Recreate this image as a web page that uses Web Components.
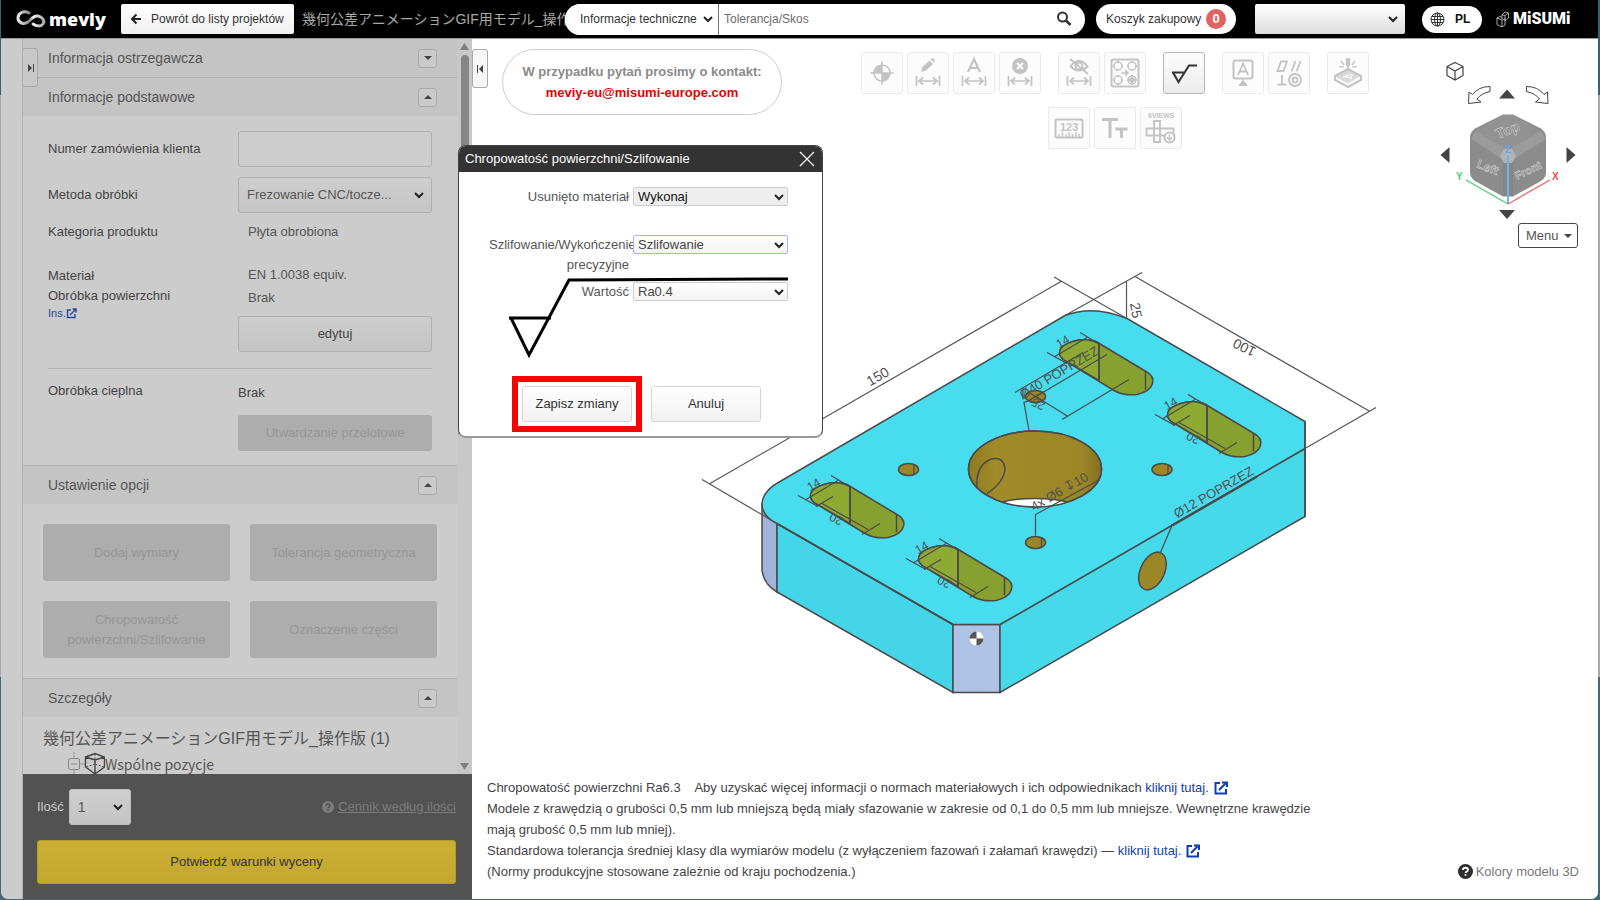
<!DOCTYPE html>
<html lang="pl">
<head>
<meta charset="utf-8">
<title>meviy – Chropowatość powierzchni/Szlifowanie</title>
<style>
html,body{margin:0;height:100%}
body{font-family:"Liberation Sans","Noto Sans CJK JP",Arial,sans-serif;font-size:13px;line-height:20px;color:#444;
background:linear-gradient(#2f6577 0 95px,#a9a9b4 95px 677px,#3d6b7c 677px);overflow:hidden}
</style>
</head>
<body>
<meviy-app></meviy-app>
<script>
const BASE = `
*{box-sizing:border-box}
button,select,input{font:inherit;color:inherit;margin:0}
button{cursor:pointer;padding:0}
svg{display:block;flex:none}
select{appearance:none;background-repeat:no-repeat;
background-image:url("data:image/svg+xml,%3Csvg xmlns='http://www.w3.org/2000/svg' width='10' height='8'%3E%3Cpath d='M1 2l4 4 4-4' fill='none' stroke='%23222' stroke-width='2'/%3E%3C/svg%3E"),var(--fill,none);
background-position:right 7px center,0 0}
`;
function define(name, css, html) {
  customElements.define(name, class extends HTMLElement {
    constructor() {
      super();
      const t = document.createElement('template');
      t.innerHTML = `<style>${BASE}${css}</style>${typeof html === 'function' ? html(this) : html}`;
      this.attachShadow({mode: 'open'}).append(t.content.cloneNode(true));
    }
  });
}

/* ---------- header ---------- */
define('top-bar', `
:host{display:flex;align-items:center;height:38px;background:#000;color:#333;padding:0 28px 0 15px}
.logo{display:flex;align-items:center;gap:2px;width:105px;color:#fff;text-decoration:none;font:800 18px/24px "Open Sans",sans-serif;flex:none}
.back{display:flex;align-items:center;gap:10px;width:173px;height:30px;border:0;border-radius:2px;background:linear-gradient(#fff,#f0f0f0);padding:0 10px;flex:none;white-space:nowrap;font-size:12px}
.title{width:270px;margin-left:8px;font-size:14px;color:#a8a8a8;white-space:nowrap;overflow:hidden;flex:none}
.search{position:relative;display:flex;flex:1;min-width:300px;height:31px;margin-left:-7px;background:#fff;border-radius:16px;overflow:hidden}
.search select{width:154px;border:0;border-right:1px solid #777;padding-left:15px;background-color:#fff;color:#333;font-size:12px}
.search select{background-position:right 5px center}
.search input{flex:1;min-width:0;border:0;padding:0 5px;outline:0;background:none;font-size:12px}
.search input::placeholder{color:#6d6d6d;opacity:1}
.search button{border:0;background:none;width:42px;display:grid;place-items:center}
.pill{display:flex;align-items:center;background:#fff;border:0;border-radius:16px;white-space:nowrap;flex:none}
.cart{width:140px;height:30px;margin-left:11px;padding:0 10px;justify-content:space-between;font-size:12px}
.cart b{width:20px;height:20px;border-radius:50%;background:#e06262;color:#fff;text-align:center;font-size:13px}
.user{width:150px;height:30px;margin-left:19px;border:0;border-radius:2px;--fill:linear-gradient(#fff,#ddd);flex:none}
.lang{width:60px;height:27px;margin-left:17px;padding:0 8px;gap:10px;font-weight:bold;font-size:12px;color:#111}
.misumi{display:flex;align-items:center;gap:4px;margin-left:14px;color:#fff;text-decoration:none;font:900 16px/20px Roboto,sans-serif;width:74px;flex:none}
`, `
<a class="logo" href="#"><svg width="31" height="18" viewBox="0 0 31 18" fill="none"><defs><linearGradient id="g"><stop stop-color="#eee"/><stop offset=".45" stop-color="#8a8686"/><stop offset=".6" stop-color="#f2f2f2"/><stop offset="1" stop-color="#aaa"/></linearGradient></defs><path d="M13 3C8 0 2 3 2 8s6 7 10 4 5-7 10-6 7 5 5 8-7 2-10 0" stroke="url(#g)" stroke-width="3" stroke-linecap="round"/></svg><span>meviy</span></a>
<button class="back"><svg width="10" height="12" viewBox="0 0 10 12" fill="none" stroke="#222" stroke-width="2"><path d="M10 6H1M5.500 1.500L1 6l4.500 4.500"/></svg>Powrót do listy projektów</button>
<div class="title">幾何公差アニメーションGIF用モデル_操作版</div>
<div class="search"><select aria-label="Zakres"><option>Informacje techniczne</option></select><input type="text" placeholder="Tolerancja/Skos" aria-label="Szukaj"><button aria-label="Szukaj"><svg width="16" height="16" viewBox="0 0 16 16" fill="none" stroke="#333"><circle cx="6.500" cy="6" r="4.500" stroke-width="2"/><path d="M10 9.500l4.500 4.500" stroke-width="2.500"/></svg></button></div>
<button class="pill cart">Koszyk zakupowy<b>0</b></button>
<select class="user" aria-label="Użytkownik"><option></option></select>
<button class="pill lang"><svg width="15" height="15" viewBox="0 0 15 15" fill="none" stroke="#333"><circle cx="7.500" cy="7.500" r="6.500"/><ellipse cx="7.500" cy="7.500" rx="3" ry="6.500"/><path d="M7.500 1v13M1 7.500h13M2 4.500h11M2 10.500h11"/></svg>PL</button>
<a class="misumi" href="#"><svg width="13" height="17" viewBox="0 0 13 17" fill="none" stroke="#bbb" stroke-width=".9"><path d="M1 7l5 2v7l-5-2.500zM6 9l3-1.500V14L6 16M1 7l3-1.500L6 6.500M6 4l3-3 3.500 1v5L9 10V4.500L6 4v4M9 4.500L12.500 2"/></svg><span>MiSUMi</span></a>
`);

/* ---------- sidebar ---------- */
define('panel-section', `
:host{display:block}
header{display:flex;align-items:center;justify-content:space-between;height:39px;border-top:1px solid #b2b2b2;background:#c4c4c4;padding:0 20px 0 25px}
:host([first]) header{height:38px;border-top:0}
h2{margin:0;font-size:14px;font-weight:normal;color:#555}
button{width:19px;height:19px;border:1px solid #aaa;border-radius:3px;background:#cacaca;display:grid;place-items:center}
`, el => `<header><h2>${el.getAttribute('heading')}</h2><button aria-label="Zwiń lub rozwiń"><svg width="8" height="4"><path d="${el.hasAttribute('closed') ? 'M0 0h8L4 4z' : 'M0 4h8L4 0z'}" fill="#444"/></svg></button></header><slot></slot>`);

define('edge-toggle', `
:host{display:block;position:absolute;z-index:2}
button{display:grid;place-items:center;width:16px;height:39px;border:1px solid #aaa;border-radius:3px;background:var(--toggle,#c8c8c8)}
`, el => `<button aria-label="Zwiń panel"><svg width="7" height="8"><path d="${el.hasAttribute('left') ? 'M0 0h1v8H0zM6 0v8L2 4z' : 'M6 0h1v8H6zM1 0v8l4-4z'}" fill="#444"/></svg></button>`);

define('side-bar', `
:host{display:grid;grid-template-rows:1fr 125px;width:450px;border-left:1px solid #b2b2b2;position:relative;min-height:0;background:#ccc}
edge-toggle{left:-1px;top:9px}
.area{display:flex;min-height:0;overflow:hidden}
.list{flex:1;overflow:hidden}
.bar{width:15px;background:#c8c8c8;display:flex;flex-direction:column;align-items:center;padding:4px 0}
.bar i{width:8px;height:98px;border-radius:4px;background:#868686;margin:5px 0 auto}
.form{padding:15px 25px 14px;color:#444}
.row{display:grid;grid-template-columns:190px 194px}
.row>:first-child{align-self:center}
.row.top>:first-child{align-self:start}
.in{height:36px;border:1px solid #b0b0b0;border-radius:3px;background-color:#cdcdcd;width:100%}
select.in{padding:0 8px;--fill:linear-gradient(#cdcdcd,#c6c6c6);color:#555}
.row+.row{margin-top:10px}
.form .cat{height:38px;margin-top:0;align-items:center}
.form .mat{margin-top:14px;height:21px}
.form .surf{margin-top:0}
.v{padding-left:10px;color:#555}
.ins{display:flex;align-items:center;color:#27489b;font-size:11px;line-height:14px;text-decoration:none}
.surf .v{padding-top:2px}
.surf .in{margin-top:8px;background:linear-gradient(#cdcdcd,#c4c4c4)}
hr{border:0;height:1px;background:#b2b2b2;margin:16px 0 0}
.heat{padding-top:12px}
.heat .b{padding-top:2px}
.off{border:0;border-radius:3px;background:#adadad;color:#969696}
.heat .off{width:100%;height:36px;margin-top:12px}
.opts{display:grid;grid-template-columns:1fr 1fr;grid-auto-rows:57px;gap:20px;padding:20px}
.det{padding:10px 20px 0;color:#555}
.det p{margin:0;font-size:16px;line-height:24px;white-space:nowrap}
.tree{display:flex;align-items:center;height:26px;padding-left:25px;font:14px/24px "Noto Sans CJK JP",sans-serif}
footer{background:#525252;padding:15px 16px 0 14px;color:#ccc}
.q{display:flex;align-items:center;height:36px}
.q select{width:62px;height:36px;margin-left:5px;border:1px solid #bbb;border-radius:3px;--fill:linear-gradient(#cfcfcf,#c4c4c4);color:#555;font-size:14px;padding-left:8px}
.q a{margin-left:auto;display:flex;align-items:center;gap:4px;color:#7c7c7c}
.go{width:100%;height:44px;margin-top:15px;border:1px solid #b69a2c;border-radius:3px;background:linear-gradient(#ccb035,#c4a72f);color:#333}
`, `
<edge-toggle></edge-toggle>
<div class="area"><div class="list">
<panel-section first closed heading="Informacja ostrzegawcza"></panel-section>
<panel-section heading="Informacje podstawowe"><div class="form">
<div class="row"><label for="n">Numer zamówienia klienta</label><input id="n" type="text" class="in"></div>
<div class="row"><label for="m">Metoda obróbki</label><select id="m" class="in"><option>Frezowanie CNC/tocze...</option></select></div>
<div class="row cat"><span>Kategoria produktu</span><span class="v">Płyta obrobiona</span></div>
<div class="row mat"><span>Materiał</span><span class="v">EN 1.0038 equiv.</span></div>
<div class="row top surf"><div>Obróbka powierzchni<a class="ins" href="#">Ins.<svg width="11" height="11" viewBox="0 0 11 11" fill="none" stroke="#27489b" stroke-width="1.400"><path d="M5 2H1.500v7.500H9V6M4 7l5.500-5.500M6.500 1H10v3.500"/></svg></a></div><div><div class="v">Brak</div><button class="in">edytuj</button></div></div>
<hr>
<div class="row top heat"><div>Obróbka cieplna</div><div class="b">Brak<button class="off" disabled>Utwardzanie przelotowe</button></div></div>
</div></panel-section>
<panel-section heading="Ustawienie opcji"><div class="opts">
<button class="off" disabled>Dodaj wymiary</button><button class="off" disabled>Tolerancja geometryczna</button>
<button class="off" disabled>Chropowatość powierzchni/Szlifowanie</button><button class="off" disabled>Oznaczenie części</button></div></panel-section>
<panel-section heading="Szczegóły"><div class="det"><p>幾何公差アニメーションGIF用モデル_操作版 (1)</p>
<div class="tree"><svg width="37" height="26" viewBox="0 0 37 26" fill="none"><path d="M6 1v24M12 13h6" stroke="#999"/><rect x=".5" y="7.500" width="11" height="11" rx="1.500" fill="#ccc" stroke="#888"/><path d="M3 13h6" stroke="#888"/><path d="M17.500 6L27 2.500 36.500 6v10L27 23l-9.500-7zM17.500 6L27 9l9.500-3M27 9v14" stroke="#444" stroke-width="1.400"/><path d="M27 3v10l9 3M27 13l-9 3" stroke="#555" stroke-dasharray="2 1.500"/></svg>Wspólne pozycje</div></div></panel-section>
</div><div class="bar"><svg width="9" height="7"><path d="M0 7h9L4.500 0z" fill="#808080"/></svg><i></i><svg width="9" height="7"><path d="M0 0h9L4.500 7z" fill="#808080"/></svg></div></div>
<footer><div class="q"><label for="q">Ilość</label><select id="q"><option>1</option></select><a href="#"><svg width="12" height="12" viewBox="0 0 12 12"><circle cx="6" cy="6" r="6" fill="#7c7c7c"/><path d="M4 4.700C4 2.500 8 2.500 8 4.700 8 6 6 6 6 7.300M6 8.300v1.400" stroke="#525252" stroke-width="1.500" fill="none"/></svg><u>Cennik według ilości</u></a></div>
<button class="go">Potwierdź warunki wyceny</button></footer>
`);

/* ---------- toolbar ---------- */
const DIM = '<path d="M9.500 24v10M32.500 24v10M12 29h18M16 25.500L12 29l4 3.500M26 25.500l4 3.500-4 3.500" fill="none" stroke-width="1.700"/>';
const ICONS = {
  origin: '<circle cx="21" cy="21" r="8" fill="none" stroke-width="1.500"/><path d="M21 9.500v23M9.500 21h23" stroke-width="1.500"/><path d="M21 21v-8a8 8 0 0 0-8 8zM21 21v8a8 8 0 0 0 8-8z" stroke="none"/>',
  edit: DIM + '<path d="M14 20l1.500-5 7-6.500 3.500 3.500-7 6.500zM23.500 7.500l1-1q1.500-.5 2.500.5t.5 2.500l-1 1z" stroke="none"/>',
  auto: DIM + '<path d="M15 20l6-13 6 13M17 16h8" fill="none" stroke-width="2.200"/>',
  remove: DIM + '<circle cx="21" cy="14" r="8" stroke="none"/><path d="M18 11l6 6M24 11l-6 6" stroke="#fff" stroke-width="2"/>',
  hide: DIM + '<path d="M12.500 14.500q8.500-11 17 0-8.500 8-17 0zM12 7l18 15" fill="none" stroke-width="2"/><circle cx="21" cy="14" r="3.500" fill="none" stroke-width="2"/>',
  holes: '<rect x="7.500" y="7.500" width="27" height="27" rx="2" fill="none" stroke-width="2"/><g fill="none" stroke-width="1.500"><circle cx="14" cy="14" r="4"/><circle cx="28" cy="14" r="4"/><circle cx="14" cy="28" r="4"/><circle cx="28" cy="28" r="4"/><circle cx="28" cy="28" r="2"/><path d="M9 14h2M17 14h2M14 9v2M14 17v2M23 14h2M31 14h2M28 9v2M28 17v2M9 28h2M17 28h2M14 23v2M14 31v2M23 28h10M28 23v10M17 21h7M21 18l3 3-3 3"/></g>',
  rough: '<path d="M9 20.500h13.500M10 20.500L15.500 30 26 13.500h8" fill="none" stroke="#333" stroke-width="2"/>',
  note: '<rect x="11.500" y="8.500" width="19" height="18" rx="2" fill="none" stroke-width="2"/><path d="M21 27v5M17 33.500h8l-4-5z"/><path d="M16 23l5-11.500L26 23M18 19.500h6" fill="none" stroke-width="1.800"/>',
  geo: '<g fill="none" stroke-width="1.800"><path d="M9.500 19L13 9.500h6L15.500 19zM23.500 19.500l4-10.500M28.500 19.500l4-10.500M9.500 32.500h9M14 23v9.500"/><circle cx="27" cy="28" r="6"/><circle cx="27" cy="28" r="2.500"/></g>',
  mark: '<path d="M8 24l13-7 13 7v4l-13 7-13-7z" fill="none" stroke-width="2"/><path d="M8 24l13-6 13 5-13 8z" opacity=".6"/><path d="M16 25l9-3-1 5-2-2z" stroke="#fff" fill="none"/><path d="M19.500 7h3v5l-1.500 3-1.500-3zM14 9l3 4M28 9l-3 4M12.500 14.500l4 .500M29.500 14.500l-4 .500" stroke-width="1.500"/>',
  ruler: '<rect x="7.500" y="12.500" width="27" height="18" rx="1" fill="none" stroke-width="2"/><path d="M11 30v-3M14.500 30v-5M18 30v-3M21 30v-5M24.500 30v-3M28 30v-5M31 30v-3" stroke-width="1.500"/><text x="12" y="24" font-size="11" font-weight="bold" stroke="none">123</text>',
  text: '<path d="M8 12.500h16M16 12.500V31M21.500 22h12M27.500 22v9" fill="none" stroke-width="3"/>',
  views: '<text x="8" y="11" font-size="7" font-weight="bold" stroke="none">6VIEWS</text><g fill="none" stroke-width="1.900"><path d="M14 14h6v21h-6zM6.500 21.500h27v7h-27z"/></g><circle cx="29.500" cy="30.500" r="5" fill="#fcfcfc" stroke-width="2"/><path d="M29.500 27.500v5M27 30.500l2.500 2.500 2.500-2.500" fill="none" stroke-width="1.500"/>'
};
define('tool-button', `
:host{display:block}
button{display:block;width:42px;height:42px;border:1px solid #eaeaea;border-radius:3px;background:#fcfcfc}
:host([active]) button{border-color:#b5b5b5;background:linear-gradient(#fcfcfc,#ececec)}
svg{margin:-1px}
`, el => `<button aria-label="${el.getAttribute('label')}"><svg width="42" height="42" viewBox="0 0 42 42" fill="#c3c3c3" stroke="#c3c3c3">${ICONS[el.getAttribute('icon')]}</svg></button>`);
const tb = (i, l, a = '') => `<tool-button icon="${i}" label="${l}" ${a}></tool-button>`;
define('tool-bar', `
:host{display:flex;flex-wrap:wrap;justify-content:center;align-content:flex-start;gap:13px 17px;width:510px}
div{display:flex;gap:4px}
`, `<div>${tb('origin','Punkt odniesienia')}${tb('edit','Edytuj wymiar')}${tb('auto','Wymiar automatyczny')}${tb('remove','Usuń wymiar')}</div>
<div>${tb('hide','Ukryj wymiary')}${tb('holes','Grupa otworów')}</div><div>${tb('rough','Chropowatość','active')}</div>
<div>${tb('note','Adnotacja')}${tb('geo','Tolerancja geometryczna')}</div><div>${tb('mark','Oznaczenie')}</div>
<div>${tb('ruler','Wartości')}${tb('text','Rozmiar tekstu')}${tb('views','Sześć widoków')}</div>`);

define('view-cube', `
:host{display:flex;flex-direction:column;align-items:flex-end}
.menu{display:flex;align-items:center;justify-content:space-between;width:60px;height:25px;margin:3px 2px 0 0;padding:0 5px 0 7px;border:1px solid #444;border-radius:3px;background:#fff;color:#555}
`, `<svg width="144" height="164" viewBox="1436 56 144 164" fill="none" role="img" aria-label="Orientacja widoku">
<path d="M1455 62.500l8 4v9l-8 4.500-8-4.500v-9zM1447 66.500l8 4.500 8-4.500M1455 71v9" stroke="#444" stroke-width="1.200"/>
<path d="M1490 86.500v5q-9 2-13 7.500l4 3-12.500 1.500L1469 92l3.500 2.500q6-8 17.500-8zM1526.500 86.500v5q9 2 13 7.500l-4 3 12.500 1.500-.5-11.500-3.500 2.500q-6-8-17.500-8z" stroke="#444"/>
<path d="M1499 98.500l8-9 8 9zM1499 210l8 9 8-9zM1449.500 147v16l-9-8zM1566.500 147v16l9-8z" fill="#444"/>
<path d="M1503 114.500h10l28 14q5 4 5 9v35q0 5-5 8.500l-28 15.500h-10l-28-15.500q-5-3.500-5-8.500v-35q0-5 5-9z" fill="#8c8c8c"/>
<path d="M1475 131l28-16h10l28 16-30 18h-6z" fill="#929292"/><path d="M1471 139l4-8 30 17v10l-3 1zM1546 139l-5-8-30 17v10l3 1z" fill="#9b9b9b"/>
<path d="M1503 162v34h10v-34z" fill="#868686"/><path d="M1504 149h8l4 7-4 7h-8l-4-7z" fill="#b4b4b4"/>
<g font-size="14" fill="#888" stroke="#ccc" stroke-width=".6" font-weight="bold"><text x="1498" y="139" transform="rotate(-22 1498 139)">Top</text><text x="1476" y="167" transform="rotate(22 1476 167)" font-size="12">Left</text><text x="1517" y="180" transform="rotate(-26 1517 180)" font-size="11">Front</text></g>
<path d="M1508 155v49" stroke="#72b2ee" stroke-width="2"/><path d="M1508 204l-42-24" stroke="#45d070" stroke-width="1.300"/><path d="M1508 204l42-24" stroke="#f06464" stroke-width="1.300"/>
<g font-size="10" font-weight="bold"><text x="1505" y="153" fill="#5ba8f5">Z</text><text x="1456" y="180" fill="#45d070">Y</text><text x="1552" y="180" fill="#f05050">X</text></g></svg>
<button class="menu">Menu<svg width="8" height="4"><path d="M0 0h8L4 4z" fill="#444"/></svg></button>`);

/* ---------- part drawing ---------- */
const SLOT = `<path d="M847 483L897 513C908 519 906 532 888 536 880 537 872 536 865 532L814 501C806 493 812 485 830 481.500 837 481 842 481 847 483z" fill="#87a030"/>
<path d="M850 485v37L814 501C806 493 812 485 830 481.500 837 481 842 481 850 485z" fill="#8eaa33"/><path d="M850 485v37M896.500 513v18"/>`;
const D14 = `<path d="M798 494l20 11M831 474l20 12M806 498l32-19" stroke-width="1.200"/><text x="810" y="490" font-size="12" transform="rotate(-30 810 490)">14</text>`;
const D20 = `<path d="M822 502l46 26M833 495l-17 10M880 522l-18 11" stroke-width="1.200"/><text x="844" y="517" font-size="12" transform="rotate(207 844 517)">20</text>`;
const at = (x, y, s) => `<g transform="translate(${x} ${y})">${s}</g>`;
define('part-model', `
:host{display:block;min-height:0}
svg{width:100%;height:100%}
text{fill:#505050;stroke:none}
`, `<svg viewBox="472 249 1126 526" fill="none" stroke="#4a4a4a" stroke-width="1.500" role="img" aria-label="Model 3D części">
<defs><linearGradient id="h"><stop stop-color="#8e7a22"/><stop offset=".2" stop-color="#a08b28"/><stop offset=".85" stop-color="#9c8727"/><stop offset="1" stop-color="#84711f"/></linearGradient><clipPath id="c"><ellipse cx="1035" cy="467.500" rx="66.500" ry="38"/></clipPath></defs>
<path d="M762 503v66q2 14 15 21.500V522z" fill="#a0b3d9"/>
<path d="M777 522v68.500L953 691v-68z" fill="#44d6e8"/><path d="M953 623h47v68h-47z" fill="#aec2e5"/><path d="M1000 623l305-176v68l-305 176z" fill="#45d9ea"/>
<path d="M777 522Q762 515 762 502 763 489 780 480L1065 314Q1093 303 1127 317L1305 420v27l-305 176h-47z" fill="#47dcee"/>
<path d="M1305 420v95M777 522l176 101"/>
<g stroke-width="1.200" stroke="#555"><path d="M702 478l75 44M710 482l351-202M1054 275.500l73 41.500M1135 275l235 135M1142 271l-77 43M1376 406l-71 41M1126.500 280v37"/></g>
<ellipse cx="1035" cy="467.500" rx="66.500" ry="38" fill="url(#h)"/>
<ellipse cx="1035" cy="509" rx="46" ry="12" fill="#fff" clip-path="url(#c)"/><ellipse cx="1035" cy="467.500" rx="66.500" ry="38"/>
<path d="M977 487q-2-22 13-29 13-4 15 9-1 14-18 25"/>
${SLOT}${D14}${D20}${at(108, 63, SLOT + D14 + D20)}${at(249, -143, SLOT + D14)}${at(357, -81, SLOT + D14 + D20)}
<g fill="#9c8727"><ellipse cx="908.500" cy="468" rx="10" ry="6"/><ellipse cx="1162" cy="468" rx="10" ry="6"/><ellipse cx="1035.500" cy="395" rx="10" ry="6"/><ellipse cx="1035.500" cy="541" rx="10" ry="6"/><ellipse cx="1152.500" cy="569.500" rx="12" ry="20" transform="rotate(25 1152.500 569.500)"/></g>
<g stroke-width="1.200"><path d="M914 463v10M1168 463v10M1041.500 536v10M1029 391l13 8M1029 399l13-8"/>
<path d="M1015 391l68-40M1036 395l71-42M1062 418l67-40M1036 395l32 20M1023 387v11M1029 429l-5-28 8-3M1035.500 534v-21L1100 478M1172 524l-12 28"/></g>
<path d="M1172 524l85-49" stroke-width="2.500"/>
<g font-size="13"><text x="1023" y="398" transform="rotate(-31 1023 398)">Ø40 POPRZEZ</text><text x="1046" y="402" font-size="12" transform="rotate(207 1046 402)">25</text>
<text x="1034" y="510" transform="rotate(-30 1034 510)">4x Ø6 ↧10</text><text x="1177" y="517" transform="rotate(-30 1177 517)">Ø12 POPRZEZ</text></g>
<g font-size="14"><text x="870" y="385" transform="rotate(-30 870 385)">150</text><text x="1257" y="347" transform="rotate(207 1257 347)">100</text><text x="1130" y="302" transform="rotate(80 1130 302)">25</text></g>
<circle cx="976.500" cy="637" r="7" fill="#fff" stroke="none"/><path d="M976.500 637v-7a7 7 0 0 1 7 7zM976.500 637v7a7 7 0 0 1-7-7z" fill="#555" stroke="none" transform="rotate(90 976.500 637)"/>
</svg>`);

/* ---------- viewer ---------- */
const EXT = '<svg width="14" height="14" viewBox="0 0 14 14" fill="none" stroke="#0f3fae" stroke-width="2"><path d="M6 2H1.500v10.500H12V8"/><path d="M5 9l6.500-6.500M8 1.500h5v4.500"/></svg>';
define('viewer-pane', `
:host{display:grid;grid-template-rows:211px 1fr auto;position:relative;background:#fff;min-width:0;min-height:0;--toggle:#f8f8f8}
edge-toggle{left:0;top:10px}
.top{display:flex;justify-content:space-between;padding:10px 18px 0 30px}
.contact{width:280px;height:66px;border:1px solid #ccc;border-radius:33px;text-align:center;font-weight:bold;color:#8a8a8a;padding:11px 0;line-height:21px;flex:none;white-space:nowrap}
.contact a{color:#e60000;text-decoration:none}
tool-bar{margin:3px 0 0 12px}
view-cube{margin-top:7px}
.notes{display:flex;justify-content:space-between;align-items:flex-end;padding:0 19px 17px 15px;line-height:21px;color:#444}
.notes p{margin:0;max-width:840px}
.notes a{color:#0f3fae;text-decoration:none}
.notes p svg{display:inline-block;vertical-align:-3px;margin-left:5px}
.colors{display:flex;align-items:center;gap:3px;border:0;background:none;color:#777;height:21px}
`, `<edge-toggle left></edge-toggle>
<div class="top"><div class="contact">W przypadku pytań prosimy o kontakt:<br><a href="#">meviy-eu@misumi-europe.com</a></div><tool-bar></tool-bar><view-cube></view-cube></div>
<part-model></part-model>
<div class="notes"><p>Chropowatość powierzchni Ra6.3&nbsp;&nbsp;&nbsp; Aby uzyskać więcej informacji o normach materiałowych i ich odpowiednikach <a href="#">kliknij tutaj.${EXT}</a><br>Modele z krawędzią o grubości 0,5 mm lub mniejszą będą miały sfazowanie w zakresie od 0,1 do 0,5 mm lub mniejsze. Wewnętrzne krawędzie mają grubość 0,5 mm lub mniej).<br>Standardowa tolerancja średniej klasy dla wymiarów modelu (z wyłączeniem fazowań i załamań krawędzi) — <a href="#">kliknij tutaj.${EXT}</a><br>(Normy produkcyjne stosowane zależnie od kraju pochodzenia.)</p>
<button class="colors"><svg width="15" height="15" viewBox="0 0 15 15"><circle cx="7.500" cy="7.500" r="7.500" fill="#2f2f2f"/><path d="M5 6C5 3 10 3 10 6 10 7.500 7.500 7.500 7.500 9M7.500 10v1.800" stroke="#fff" stroke-width="1.800" fill="none"/></svg>Kolory modelu 3D</button></div>`);

/* ---------- dialog ---------- */
define('roughness-dialog', `
:host{display:block;position:absolute;left:458px;top:145px;width:365px;height:293px;z-index:5;background:#fff;border:1px solid #444;border-bottom:2px solid #999;border-radius:8px;overflow:hidden}
header{display:flex;align-items:center;justify-content:space-between;height:26px;padding:0 7px 0 6px;background:#333;color:#fff}
h1{margin:0;font-size:13px;font-weight:normal}
header button{border:0;background:none}
form{position:relative;padding:15px 34px 0 30px}
.r{display:grid;grid-template-columns:140px 155px;column-gap:4px;align-items:start}
.r label{text-align:right;color:#555}
.r select{position:relative;height:19px;border:1px solid #ccc;border-radius:2px;padding:0 4px;line-height:16px;--fill:linear-gradient(#fff,#f3f3f3);color:#444;background-position:right 3px center,0 0}
.r .dark{--fill:linear-gradient(#eee,#eee);color:#111}
.r .foc{border-color:#a9b4f2}
.s{margin-top:28px}
.t{margin-top:7px}
.mark{position:absolute;left:49px;top:103px}
.btns{display:flex;gap:9px;margin:74px 0 0 23px}
.btns span{border:6px solid #f00;padding:4px}
.btns button{display:block;width:110px;height:36px;border:1px solid #d4d4d4;border-radius:3px;background:linear-gradient(#fff,#f1f1f1);color:#333}
.btns>button{margin-top:10px}
`, `<header><h1>Chropowatość powierzchni/Szlifowanie</h1><button aria-label="Zamknij"><svg width="16" height="16" viewBox="0 0 16 16"><path d="M1 1l14 14M15 1L1 15" stroke="#fff" stroke-width="1.200"/></svg></button></header>
<form onsubmit="return false"><div class="r"><label for="a">Usunięto materiał</label><select id="a" class="dark"><option>Wykonaj</option></select></div>
<div class="r s"><label for="b">Szlifowanie/Wykończenie precyzyjne</label><select id="b" class="foc"><option>Szlifowanie</option></select></div>
<div class="r t"><label for="c">Wartość</label><select id="c"><option>Ra0.4</option></select></div>
<svg class="mark" width="282" height="86" viewBox="0 0 282 86" fill="none" stroke="#000" stroke-width="3"><path d="M1 43h42M3 43l18 37L61 5l219-1"/></svg>
<div class="btns"><span><button>Zapisz zmiany</button></span><button>Anuluj</button></div></form>`);

define('meviy-app', `
:host{display:grid;grid-template-rows:39px 1fr;height:calc(100vh - 1px);margin:0 2px 0 1px;border-radius:0 0 7px 7px;overflow:hidden;background:#ccc}
top-bar{border-bottom:1px solid #999;height:39px}
main{display:grid;grid-template-columns:450px 1fr;padding-left:21px;min-height:0}
`, `<top-bar></top-bar><main><side-bar></side-bar><viewer-pane></viewer-pane></main><roughness-dialog></roughness-dialog>`);
</script>
</body>
</html>
